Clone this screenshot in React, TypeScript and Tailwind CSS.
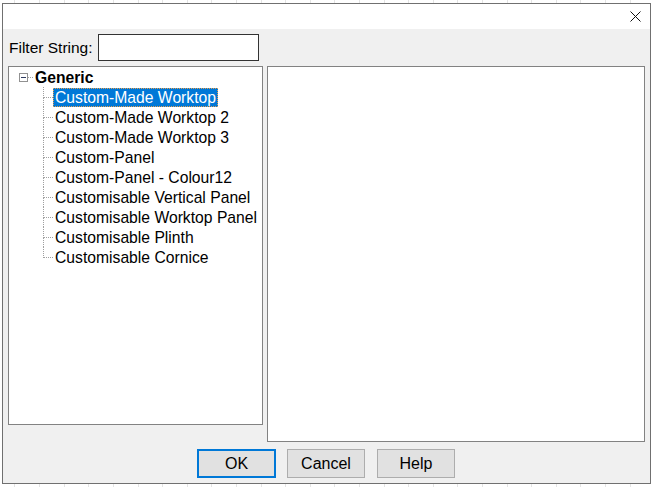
import React from "react";

const items = [
  "Custom-Made Worktop",
  "Custom-Made Worktop 2",
  "Custom-Made Worktop 3",
  "Custom-Panel",
  "Custom-Panel - Colour12",
  "Customisable Vertical Panel",
  "Customisable Worktop Panel",
  "Customisable Plinth",
  "Customisable Cornice",
];

export default function App() {
  return (
    <div
      className="w-[654px] h-[487px] overflow-hidden bg-white pt-[3px] pl-[2px] bg-[repeating-linear-gradient(90deg,transparent_0_14.5px,#e4e4e4_14.5px_15.5px,transparent_15.5px_24.6px)]"
      style={{ fontFamily: '"Liberation Sans", Arial, sans-serif' }}
    >
      <div className="w-[649px] h-[481px] border border-[#707070] flex flex-col bg-[#f0f0f0]">
        {/* title bar */}
        <div className="h-[25px] bg-white flex items-center justify-end pr-[9px] shrink-0">
          <svg width="11" height="11" viewBox="0 0 11 11" className="mt-[-1px]">
            <path d="M0.5 0.5 L10.5 10.5 M10.5 0.5 L0.5 10.5" stroke="#111" strokeWidth="1" />
          </svg>
        </div>
        {/* body */}
        <div className="flex-1 flex flex-col pt-[5px] px-[5px] pb-[5px] text-black">
          <div className="flex items-center h-[27px] shrink-0">
            <span className="text-[15.5px] leading-none ml-[1px] w-[89px] whitespace-nowrap">Filter String:</span>
            <div className="w-[161px] h-[27px] bg-white border border-[#333]" />
          </div>
          <div className="flex mt-[5px] h-[376px] shrink-0">
            {/* tree */}
            <div className="w-[255px] h-[359px] bg-white border border-[#828282] text-[15.7px] leading-none overflow-hidden">
              <div className="flex items-center h-[20px] pl-[10px]">
                <div className="w-[9px] h-[9px] border border-[#919191] flex items-center justify-center">
                  <div className="w-[5px] h-[1px] bg-[#2f3b60]" />
                </div>
                <div className="w-[5px] border-b border-dotted border-[#a0a0a0]" />
                <span className="px-[2px] pt-[2px] font-bold whitespace-nowrap">Generic</span>
              </div>
              {items.map((t, i) => {
                const last = i === items.length - 1;
                const sel = i === 0;
                return (
                  <div key={t} className="flex h-[20px] pl-[34px]">
                    <div className="w-[10px] flex flex-col shrink-0">
                      <div className="h-[11px] border-l border-b border-dotted border-[#a0a0a0]" />
                      {!last && <div className="flex-1 border-l border-dotted border-[#a0a0a0]" />}
                    </div>
                    {sel ? (
                      <div className="flex items-end h-[20px]">
                        <span className="h-[19px] flex items-center pt-[1px] px-[1px] bg-[#0078d7] text-white border border-dotted border-[#e8a050] whitespace-nowrap">
                          {t}
                        </span>
                      </div>
                    ) : (
                      <div className="flex items-center h-[20px]">
                        <span className="px-[2px] pt-[2px] whitespace-nowrap">{t}</span>
                      </div>
                    )}
                  </div>
                );
              })}
            </div>
            {/* preview */}
            <div className="ml-[4px] w-[378px] h-[376px] bg-white border border-[#828282]" />
          </div>
          <div className="flex mt-[7px] h-[29px] shrink-0 pl-[189px] text-[16px]">
            <button className="w-[79px] h-[29px] bg-[#e1e1e1] border-2 border-[#0078d7] flex items-center justify-center">
              OK
            </button>
            <button className="ml-[11px] w-[78px] h-[29px] bg-[#e1e1e1] border border-[#adadad] flex items-center justify-center">
              Cancel
            </button>
            <button className="ml-[12px] w-[78px] h-[29px] bg-[#e1e1e1] border border-[#adadad] flex items-center justify-center">
              Help
            </button>
          </div>
        </div>
      </div>
    </div>
  );
}
